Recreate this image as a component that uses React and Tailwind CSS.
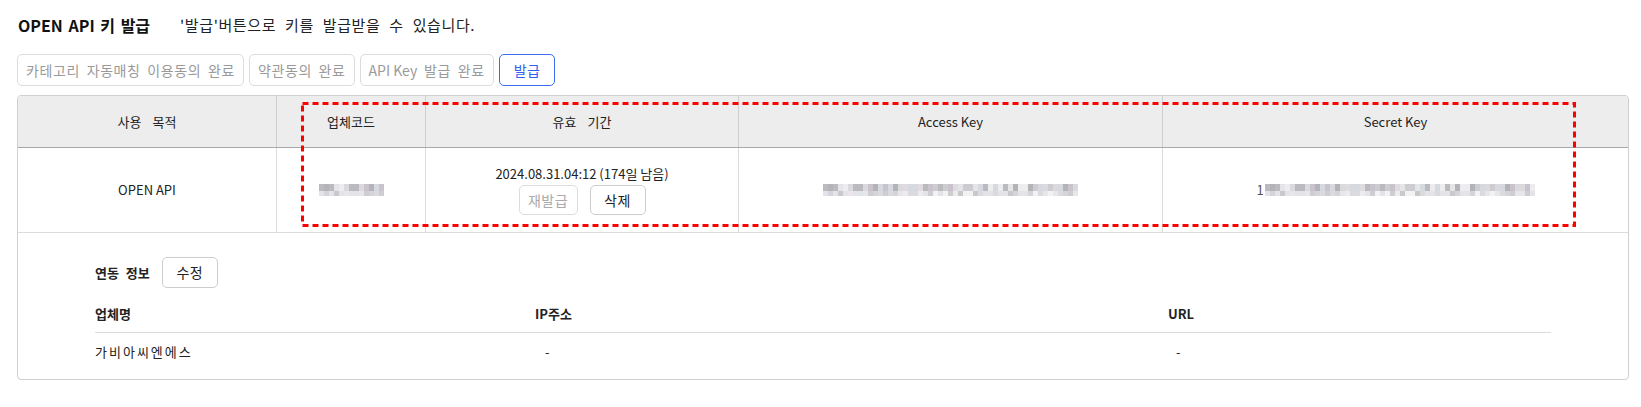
const font = { fontFamily: '"Noto Sans CJK KR", "Noto Sans", sans-serif' };

const palette = ["#b4b4b8", "#c8c8cc", "#d6d6da", "#e2e2e6", "#c2bcc6", "#d2d6dd", "#ebebed", "#ddd7de", "#acacb0"];

function Mosaic({ cols, lead }) {
  const rows = [0, 1];
  return (
    <div className="flex items-center">
      {lead && <span className="mr-[1px] text-[13px] text-[#555]">{lead}</span>}
      <div className="flex flex-col">
        {rows.map((r) => (
          <div key={r} className="flex">
            {Array.from({ length: cols }).map((_, c) => {
              const idx = (c * 7 + r * 5 + ((c * c) % 11)) % palette.length;
              return (
                <span
                  key={c}
                  className={r === 0 ? "h-[7px] w-[5px]" : "h-[5px] w-[5px]"}
                  style={{ backgroundColor: palette[idx], opacity: r === 0 ? 0.9 : 0.65 }}
                />
              );
            })}
          </div>
        ))}
      </div>
    </div>
  );
}

function StepButton({ children, active }) {
  return (
    <button
      className={
        active
          ? "h-[32px] rounded-[5px] border border-[#3a6cf4] bg-white px-[14px] text-[14px] tracking-[0.4px] text-[#2f62f0]"
          : "h-[32px] rounded-[5px] border border-[#dcdcdc] bg-white px-[8px] text-[14px] tracking-[0.6px] [word-spacing:3px] text-[#9a9a9a]"
      }
    >
      {children}
    </button>
  );
}

export default function App() {
  const headers = [
    { label: "사용 목적", w: "w-[258px]" },
    { label: "업체코드", w: "w-[149px]" },
    { label: "유효 기간", w: "w-[313px]" },
    { label: "Access Key", w: "w-[424px]" },
    { label: "Secret Key", w: "flex-1" },
  ];

  return (
    <div className="min-h-[407px] bg-white text-[#222]" style={font}>
      <div className="flex items-center pl-[18px] pt-[15px]">
        <h1 className="text-[16px] font-bold leading-[20px] [word-spacing:2px] text-[#111]">OPEN API 키 발급</h1>
        <p className="ml-[30px] text-[15px] leading-[20px] tracking-[0.6px] [word-spacing:5px] text-[#222]">
          '발급'버튼으로 키를 발급받을 수 있습니다.
        </p>
      </div>

      <div className="mt-[19px] flex gap-[5px] pl-[17px]">
        <StepButton>카테고리 자동매칭 이용동의 완료</StepButton>
        <StepButton>약관동의 완료</StepButton>
        <StepButton>
          <span className="tracking-normal [word-spacing:0px]">API Key</span> 발급 완료
        </StepButton>
        <StepButton active>발급</StepButton>
      </div>

      <div className="relative ml-[17px] mt-[9px] w-[1612px] overflow-hidden rounded-[4px] border border-[#cfcfcf]">
        <div className="flex h-[52px] border-b border-[#a8a8a8] bg-[#ededed] text-[13px] text-[#222]">
          {headers.map((h, i) => (
            <div
              key={h.label}
              className={`${h.w} flex items-center justify-center ${i > 0 ? "border-l border-[#cfcfcf]" : ""} ${i === 0 || i === 2 ? "[word-spacing:8px]" : ""}`}
            >
              {h.label}
            </div>
          ))}
        </div>

        <div className="flex h-[85px] border-b border-[#dcdcdc] text-[13px]">
          <div className="flex w-[258px] items-center justify-center">OPEN API</div>
          <div className="flex w-[149px] items-center justify-center border-l border-[#dcdcdc]">
            <Mosaic cols={13} />
          </div>
          <div className="flex w-[313px] flex-col items-center justify-center gap-[2px] border-l border-[#dcdcdc]">
            <span className="leading-[18px]">2024.08.31.04:12 (174일 남음)</span>
            <div className="flex gap-[12px]">
              <button className="h-[30px] w-[59px] rounded-[5px] border border-[#dcdcdc] bg-white text-[14px] tracking-[0.5px] text-[#aaa]">
                재발급
              </button>
              <button className="h-[30px] w-[56px] rounded-[5px] border border-[#cccccc] bg-white text-[14px] tracking-[0.5px] text-[#222]">
                삭제
              </button>
            </div>
          </div>
          <div className="flex w-[424px] items-center justify-center border-l border-[#dcdcdc]">
            <Mosaic cols={51} />
          </div>
          <div className="flex flex-1 items-center justify-center border-l border-[#dcdcdc]">
            <Mosaic cols={54} lead="1" />
          </div>
        </div>

        <div className="px-[77px] pb-[8px] pt-[24px] text-[13px]">
          <div className="flex items-center gap-[12px]">
            <span className="font-bold [word-spacing:4px]">연동 정보</span>
            <button className="h-[31px] w-[56px] rounded-[5px] border border-[#cccccc] bg-white text-[14px] tracking-[0.5px] text-[#222]">
              수정
            </button>
          </div>
          <div className="mt-[8px] flex h-[37px] items-center border-b border-[#dcdcdc] font-bold">
            <span className="w-[440px]">업체명</span>
            <span className="w-[633px]">IP주소</span>
            <span className="flex-1">URL</span>
          </div>
          <div className="flex h-[38px] items-center">
            <span className="w-[440px] tracking-[2px]">가비아씨엔에스</span>
            <span className="w-[633px] pl-[10px]">-</span>
            <span className="flex-1 pl-[8px]">-</span>
          </div>
        </div>

        <svg
          className="pointer-events-none absolute left-[283px] top-[6px]"
          width="1275"
          height="126"
        >
          <rect
            x="1.5"
            y="1.5"
            width="1272"
            height="122"
            fill="none"
            stroke="#ff0000"
            strokeWidth="3"
            strokeDasharray="6 4"
          />
        </svg>
      </div>
    </div>
  );
}
